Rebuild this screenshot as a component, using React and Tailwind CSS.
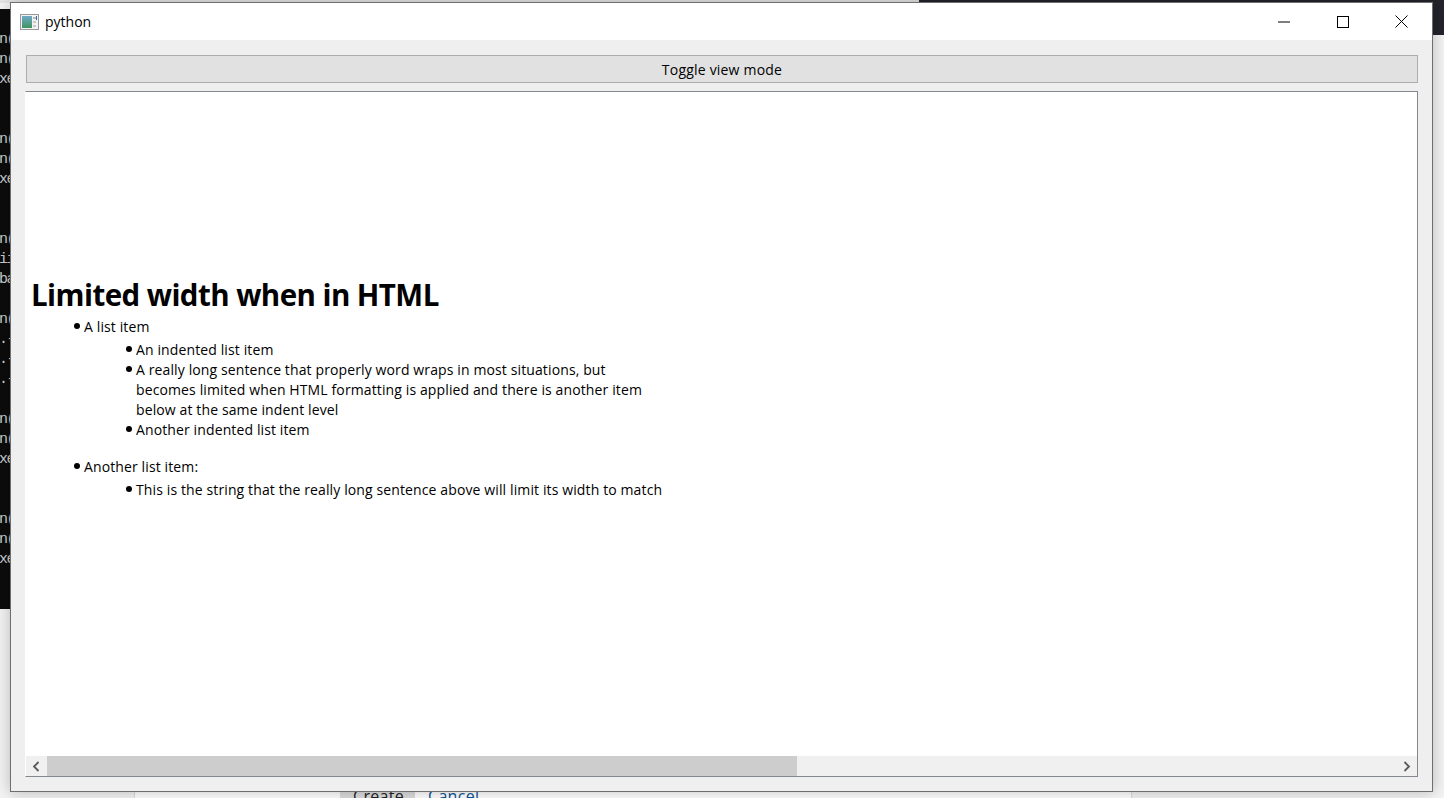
import React from 'react';

const uiFont = { fontFamily: '"Open Sans", "Noto Sans", sans-serif' };

// lines of the terminal behind the window, one row is 20px, most are cut off by the window
const terminalRows = ['', 'n(', 'n(', 'xe', '', '', 'n(', 'n(', 'xe', '', '', 'n(', 'ii', 'ba', '', 'n(', '.-', '.-', '.-', '', 'n(', 'n(', 'xe', '', '', 'n(', 'n(', 'xe'];

const PythonIcon = () => (
  <svg width="19" height="16" viewBox="0 0 19 16">
    <defs>
      <linearGradient id="pane" x1="0" y1="0" x2="0" y2="1">
        <stop offset="0" stopColor="#6fa8c8" />
        <stop offset="1" stopColor="#3f9460" />
      </linearGradient>
    </defs>
    <rect x="0.5" y="0.5" width="18" height="15" fill="#f2f2f2" stroke="#9a9a9a" />
    <rect x="2" y="2" width="10" height="12" fill="url(#pane)" />
    <rect x="13" y="3" width="3" height="2" fill="#b9b9b9" />
    <rect x="13" y="7" width="3" height="2" fill="#c9c9c9" />
    <rect x="13" y="11" width="3" height="2" fill="#c9c9c9" />
    <rect x="16" y="2" width="1" height="4" fill="#2f6fb0" />
  </svg>
);

const WindowButtons = () => (
  <div className="flex items-center h-full mr-[1px]">
    <div className="w-[59px] h-full flex items-center justify-center">
      <svg width="12" height="2" viewBox="0 0 12 2"><rect width="12" height="1" y="0.5" fill="#000" /></svg>
    </div>
    <div className="w-[59px] h-full flex items-center justify-center">
      <svg width="12" height="12" viewBox="0 0 12 12"><rect x="0.5" y="0.5" width="11" height="11" fill="none" stroke="#000" /></svg>
    </div>
    <div className="w-[59px] h-full flex items-center justify-center">
      <svg width="13" height="13" viewBox="0 0 13 13"><path d="M0.5 0.5 L12.5 12.5 M12.5 0.5 L0.5 12.5" stroke="#000" strokeWidth="1" /></svg>
    </div>
  </div>
);

const Bullet = ({ children, className = '' }) => (
  <div className={`flex ${className}`}>
    <span className="w-[6px] h-[6px] rounded-full bg-black mt-[6px] mr-[4px] shrink-0" />
    <div className="leading-[20px]">{children}</div>
  </div>
);

export default function App() {
  return (
    <div className="relative w-[1444px] h-[798px] overflow-hidden bg-[#f3f3f3]" style={uiFont}>
      {/* desktop behind the window */}
      <div className="absolute left-0 top-0 w-[919px] h-[3px] bg-[#e4e4e4]" />
      <div className="absolute left-[919px] top-0 w-[525px] h-[35px] bg-[#23232d]" />
      <div className="absolute left-0 top-[9px] w-[11px] h-[600px] bg-[#0c0c0c] overflow-hidden">
        {terminalRows.map((row, i) => (
          <div key={i} className="h-[20px] leading-[21px] text-[15px] text-[#cccccc] whitespace-nowrap -ml-[1px] tracking-[-1.5px]" style={{ fontFamily: '"Liberation Mono", monospace' }}>
            {row}
          </div>
        ))}
      </div>
      <div className="absolute left-[134px] top-[780px] w-[998px] h-[18px] bg-white border-x border-[#dddddd]" />
      <div className="absolute left-[340px] top-[786px] w-[75px] h-[12px] bg-[#dcdcdc]" />
      <div className="absolute left-[353px] top-[786px] text-[16px] leading-[20px] tracking-[0.3px] text-[#222222]">Create</div>
      <div className="absolute left-[428px] top-[786px] text-[16px] leading-[20px] tracking-[0.3px] text-[#0b5394]">Cancel</div>

      {/* python window */}
      <div className="absolute left-[10px] top-[2px] w-[1423px] h-[790px] flex flex-col bg-[#efefef] border border-[#6e6e6e] shadow-[0_0_14px_rgba(0,0,0,0.25)]">
        <div className="h-[37px] bg-white flex items-center justify-between shrink-0">
          <div className="flex items-center pl-[9px] gap-[6px]">
            <PythonIcon />
            <span className="text-[14px] text-black">python</span>
          </div>
          <WindowButtons />
        </div>

        <div className="flex-1 flex flex-col pl-[14px] pr-[14px] pt-[15px] pb-[14px] min-h-0">
          <button className="h-[28px] ml-[1px] bg-[#e1e1e1] border border-[#adadad] text-[14px] text-black tracking-[0.2px] shrink-0">
            Toggle view mode
          </button>

          <div className="mt-[8px] flex-1 flex flex-col bg-white border border-[#828790] border-l-white min-h-0">
            <div className="flex-1 pt-[186px] pl-[5px] text-[14px] text-black tracking-[0.12px] min-h-0">
              <h1 className="text-[29.5px] leading-[34px] font-bold tracking-[-0.56px]">Limited width when in HTML</h1>
              <div className="pl-[43px] mt-[5px]">
                <Bullet>A list item</Bullet>
                <div className="pl-[52px] mt-[3px]">
                  <Bullet>An indented list item</Bullet>
                  <Bullet>
                    <div className="w-[526px]">A really long sentence that properly word wraps in most situations, but becomes limited when HTML formatting is applied and there is another item below at the same indent level</div>
                  </Bullet>
                  <Bullet>Another indented list item</Bullet>
                </div>
                <Bullet className="mt-[17px]">Another list item:</Bullet>
                <div className="pl-[52px] mt-[3px]">
                  <Bullet>This is the string that the really long sentence above will limit its width to match</Bullet>
                </div>
              </div>
            </div>

            {/* horizontal scrollbar */}
            <div className="h-[20px] bg-[#f0f0f0] flex items-center shrink-0">
              <div className="w-[21px] flex items-center justify-center">
                <svg width="8" height="11" viewBox="0 0 8 11" className="-ml-[1px]"><path d="M6.5 1 L2 5.5 L6.5 10" fill="none" stroke="#5a5a5a" strokeWidth="1.8" /></svg>
              </div>
              <div className="w-[750px] h-full bg-[#cdcdcd]" />
              <div className="flex-1" />
              <div className="w-[21px] flex items-center justify-center">
                <svg width="8" height="11" viewBox="0 0 8 11"><path d="M1.5 1 L6 5.5 L1.5 10" fill="none" stroke="#5a5a5a" strokeWidth="1.8" /></svg>
              </div>
            </div>
          </div>
        </div>
      </div>
    </div>
  );
}
